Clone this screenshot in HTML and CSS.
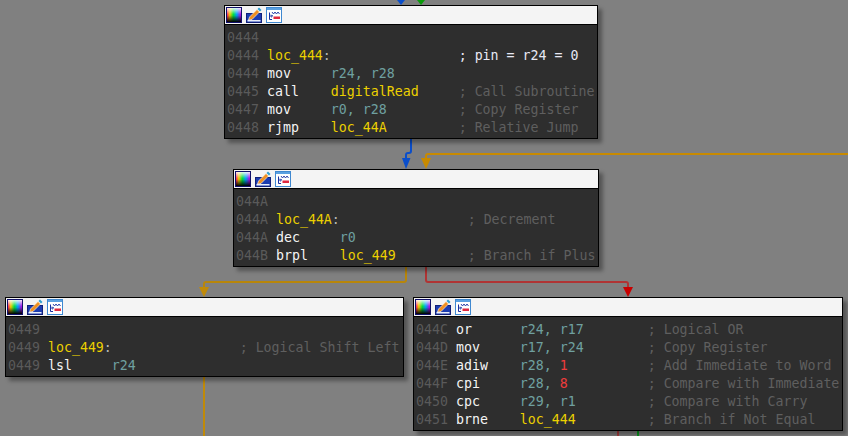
FILE: index.html
```html
<!DOCTYPE html>
<html lang="en">
<head>
<meta charset="utf-8">
<title>Graph view</title>
<link rel="stylesheet" href="styles.css">
</head>
<body>
<main class="canvas">
<svg class="edges" width="848" height="436" viewBox="0 0 848 436" fill="none">
  <g stroke-width="2">
    <path stroke="#0a4ecb" d="M411 138V151Q411 153 409 153H408Q406 153 406 155V160"/>
    <path stroke="#c88a00" d="M848 154H428Q426 154 426 156V160"/>
    <path stroke="#b8860a" d="M406 266V280Q406 282 404 282H206Q204 282 204 284V288"/>
    <path stroke="#b03434" d="M426 266V280Q426 282 428 282H626Q628 282 628 284V288"/>
    <path stroke="#c08a08" d="M204 376V436"/>
    <path stroke="#a84040" d="M618 430V436"/>
    <path stroke="#0a9a20" d="M638 430V436"/>
  </g>
  <path fill="#0a4ecb" d="M402 158H410.500L406 169Z"/>
  <path fill="#c88a00" d="M421 158H431L426 169Z"/>
  <path fill="#c08a08" d="M199 287H209L204 297Z"/>
  <path fill="#c80000" d="M623 287H633L628 297Z"/>
  <path fill="#0a4ecb" d="M397 0H405L401 5Z"/>
  <path fill="#0a9a0a" d="M417 0H425L421 5Z"/>
</svg>

<section class="node n1">
  <header class="bar">
    <svg class="ico" viewBox="0 0 16 16"><use href="#ic-color"/></svg>
    <svg class="ico" viewBox="0 0 16 16"><use href="#ic-pen"/></svg>
    <svg class="ico" viewBox="0 0 16 16"><use href="#ic-graph"/></svg>
  </header>
  <pre class="code"><span class="a">0444</span>
<span class="a">0444</span> <span class="l">loc_444</span><span class="p">:</span>                <span class="w">; pin = r24 = 0</span>
<span class="a">0444</span> <span class="m">mov</span>     <span class="r">r24, r28</span>
<span class="a">0445</span> <span class="m">call</span>    <span class="l">digitalRead</span>     <span class="c">; Call Subroutine</span>
<span class="a">0447</span> <span class="m">mov</span>     <span class="r">r0, r28</span>         <span class="c">; Copy Register</span>
<span class="a">0448</span> <span class="m">rjmp</span>    <span class="l">loc_44A</span>         <span class="c">; Relative Jump</span></pre>
</section>

<section class="node n2">
  <header class="bar">
    <svg class="ico" viewBox="0 0 16 16"><use href="#ic-color"/></svg>
    <svg class="ico" viewBox="0 0 16 16"><use href="#ic-pen"/></svg>
    <svg class="ico" viewBox="0 0 16 16"><use href="#ic-graph"/></svg>
  </header>
  <pre class="code"><span class="a">044A</span>
<span class="a">044A</span> <span class="l">loc_44A</span><span class="p">:</span>                <span class="c">; Decrement</span>
<span class="a">044A</span> <span class="m">dec</span>     <span class="r">r0</span>
<span class="a">044B</span> <span class="m">brpl</span>    <span class="l">loc_449</span>         <span class="c">; Branch if Plus</span></pre>
</section>

<section class="node n3">
  <header class="bar">
    <svg class="ico" viewBox="0 0 16 16"><use href="#ic-color"/></svg>
    <svg class="ico" viewBox="0 0 16 16"><use href="#ic-pen"/></svg>
    <svg class="ico" viewBox="0 0 16 16"><use href="#ic-graph"/></svg>
  </header>
  <pre class="code"><span class="a">0449</span>
<span class="a">0449</span> <span class="l">loc_449</span><span class="p">:</span>                <span class="c">; Logical Shift Left</span>
<span class="a">0449</span> <span class="m">lsl</span>     <span class="r">r24</span></pre>
</section>

<section class="node n4">
  <header class="bar">
    <svg class="ico" viewBox="0 0 16 16"><use href="#ic-color"/></svg>
    <svg class="ico" viewBox="0 0 16 16"><use href="#ic-pen"/></svg>
    <svg class="ico" viewBox="0 0 16 16"><use href="#ic-graph"/></svg>
  </header>
  <pre class="code"><span class="a">044C</span> <span class="m">or</span>      <span class="r">r24, r17</span>        <span class="c">; Logical OR</span>
<span class="a">044D</span> <span class="m">mov</span>     <span class="r">r17, r24</span>        <span class="c">; Copy Register</span>
<span class="a">044E</span> <span class="m">adiw</span>    <span class="r">r28, </span><span class="n">1</span>          <span class="c">; Add Immediate to Word</span>
<span class="a">044F</span> <span class="m">cpi</span>     <span class="r">r28, </span><span class="n">8</span>          <span class="c">; Compare with Immediate</span>
<span class="a">0450</span> <span class="m">cpc</span>     <span class="r">r29, r1</span>         <span class="c">; Compare with Carry</span>
<span class="a">0451</span> <span class="m">brne</span>    <span class="l">loc_444</span>         <span class="c">; Branch if Not Equal</span></pre>
</section>
</main>

<svg class="defs" width="0" height="0" aria-hidden="true">
  <defs>
    <linearGradient id="hue" x1="0" x2="1" y1="0" y2="0">
      <stop offset="0" stop-color="#ff2060"/>
      <stop offset=".2" stop-color="#f0d000"/>
      <stop offset=".45" stop-color="#00e040"/>
      <stop offset=".7" stop-color="#00a0ff"/>
      <stop offset="1" stop-color="#c000e0"/>
    </linearGradient>
    <linearGradient id="shade" x1="0" x2="0" y1="0" y2="1">
      <stop offset="0" stop-color="#fff" stop-opacity=".9"/>
      <stop offset=".45" stop-color="#fff" stop-opacity="0"/>
      <stop offset=".5" stop-color="#000" stop-opacity="0"/>
      <stop offset="1" stop-color="#000" stop-opacity="1"/>
    </linearGradient>
    <g id="ic-color">
      <rect x=".5" y=".5" width="15" height="15" fill="#fff" stroke="#10106a"/>
      <rect x="1" y="1" width="14" height="14" fill="url(#hue)"/>
      <rect x="1" y="1" width="14" height="14" fill="url(#shade)"/>
    </g>
    <g id="ic-pen">
      <rect x=".5" y="6.500" width="15" height="9" fill="#1c3cb0" stroke="#10207a"/>
      <rect x="1.500" y="13" width="13" height="1.500" fill="#e8ecf8"/>
      <path d="M2.500 13L3.500 10L11 2.500L13.500 5L6 12.500Z" fill="#f09020" stroke="#fff" stroke-width=".6"/>
      <path d="M11.500 2L13 .5L15.500 3L14 4.500Z" fill="#30a0d0"/>
    </g>
    <g id="ic-graph">
      <rect x=".5" y=".5" width="15" height="15" fill="#fff" stroke="#3f88d0"/>
      <rect x="1" y="1" width="14" height="2" fill="#5aa0e0"/>
      <path d="M3.500 5.500V12.500H6M3.500 9H6.500M6.500 9L5.200 7.700M6.500 9L5.200 10.300" stroke="#1830a0" fill="none"/>
      <path d="M6 5L7.500 7L9 5L10.500 7L12 5L13.500 7" stroke="#1830a0" stroke-width=".9" fill="none"/>
      <rect x="7.500" y="9.500" width="6.500" height="2.500" fill="#e02840"/>
    </g>
  </defs>
</svg>
</body>
</html>
```
FILE: styles.css
```css
* { box-sizing: border-box; }
html, body { margin: 0; padding: 0; }
body { background: #808080; width: 848px; height: 436px; overflow: hidden; }
.canvas { position: relative; width: 848px; height: 436px; overflow: hidden; }
.edges { position: absolute; left: 0; top: 0; }
.defs { position: absolute; }
.node {
  position: absolute;
  display: flex;
  flex-direction: column;
  border: 1px solid #000;
  background: #2e2e2e;
  box-shadow: 4px 4px 4px rgba(0, 0, 0, .35);
}
.n1 { left: 224px; top: 5px; width: 374px; height: 134px; }
.n2 { left: 233px; top: 169px; width: 366px; height: 98px; }
.n3 { left: 5px; top: 297px; width: 399px; height: 80px; }
.n4 { left: 413px; top: 297px; width: 430px; height: 134px; }
.bar {
  display: flex;
  align-items: center;
  gap: 4px;
  height: 19px;
  padding: 0 0 0 1px;
  background: #f4f4f4;
  border-bottom: 1px solid #000;
  flex: none;
}
.ico { width: 16px; height: 16px; flex: none; }
.code {
  margin: 0;
  padding: 4px 0 0 2px;
  font: 13.28px/18px "DejaVu Sans Mono", monospace;
  color: #dcdcdc;
  overflow: hidden;
}
.a { color: #5a5a5a; }
.l { color: #ecd000; }
.c { color: #5f5f5f; }
.p { color: #b8b8b8; }
.w { color: #e8e8f4; }
.m { color: #f4f4f4; }
.r { color: #6fa0a0; }
.n { color: #f03c3c; }
```
